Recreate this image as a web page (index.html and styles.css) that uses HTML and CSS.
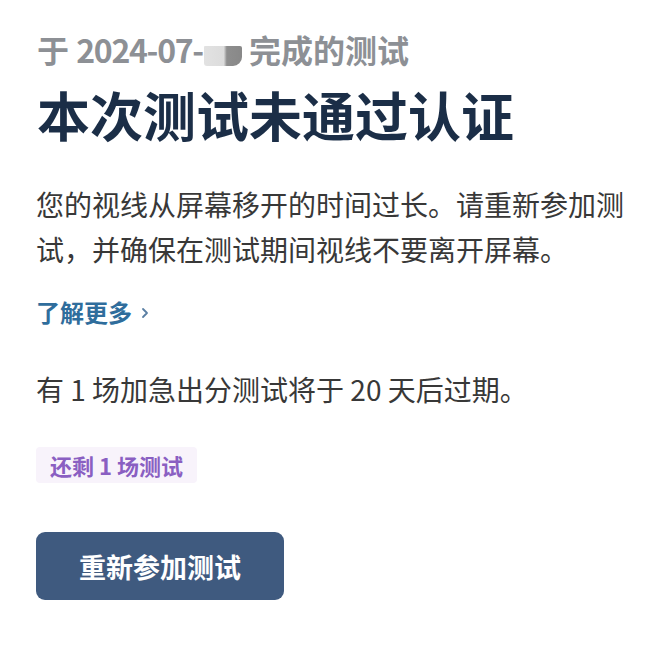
FILE: index.html
```html
<!DOCTYPE html>
<html lang="zh-CN">
<head>
<meta charset="utf-8">
<title>测试结果</title>
<link rel="stylesheet" href="styles.css">
</head>
<body>
<main class="page">
  <p class="meta">于 <span class="date">2024-07-</span><span class="redact"></span> 完成的测试</p>
  <h1 class="title">本次测试未通过认证</h1>
  <p class="desc">您的视线从屏幕移开的时间过长。请重新参加测试，并确保在测试期间视线不要离开屏幕。</p>
  <a class="more" href="#">了解更多<svg class="chev" width="8" height="12" viewBox="0 0 8 12"><path d="M2 2 L6 6 L2 10" fill="none" stroke="#5a7fa3" stroke-width="1.8" stroke-linecap="round" stroke-linejoin="round"/></svg></a>
  <p class="expire">有 1 场加急出分测试将于 20 天后过期。</p>
  <div class="badge">还剩 1 场测试</div>
  <button class="retry" type="button">重新参加测试</button>
</main>
</body>
</html>
```
FILE: styles.css
```css
* { box-sizing: border-box; }
html, body { margin: 0; padding: 0; background: #ffffff; }
body {
  font-family: "Noto Sans CJK SC", "Noto Sans", sans-serif;
  color: #3b3b3b;
}
.page {
  width: 660px;
  padding: 29px 28px 0 36px;
  display: flex;
  flex-direction: column;
  align-items: flex-start;
}
.meta {
  margin: 0;
  font-size: 32px;
  line-height: 40px;
  font-weight: 700;
  color: #8d9095;
  padding-left: 1px;
}
.date { letter-spacing: -1.3px; }
.redact {
  display: inline-block;
  width: 38px;
  height: 20px;
  margin-left: 1px;
  vertical-align: -3px;
  border-radius: 1px 2px 9px 3px;
  background: linear-gradient(90deg, #e2e2e2 0%, #dcdcdc 52%, #8e8e8e 60%, #888888 100%);
}
.title {
  margin: 13px 0 0;
  font-size: 53px;
  line-height: 64px;
  font-weight: 700;
  color: #1b2e47;
  padding-left: 1px;
}
.desc {
  margin: 36px 0 0;
  font-size: 28px;
  line-height: 45px;
  font-weight: 400;
  color: #383838;
}
.more {
  margin-top: 24px;
  font-size: 24px;
  line-height: 32px;
  font-weight: 700;
  color: #2f6d9c;
  text-decoration: none;
  display: flex;
  align-items: center;
  gap: 9px;
}
.chev { display: block; margin-top: 2px; }
.expire {
  margin: 41px 0 0;
  font-size: 28px;
  line-height: 40px;
  font-weight: 400;
  color: #383838;
}
.badge {
  margin-top: 38px;
  height: 36px;
  padding: 0 14px;
  display: flex;
  align-items: center;
  font-size: 22px;
  font-weight: 700;
  color: #8a5fc2;
  background: #f8f3fb;
  border-radius: 4px;
}
.retry {
  margin-top: 49px;
  width: 248px;
  height: 68px;
  border: none;
  border-radius: 9px;
  background: #3f5a7f;
  color: #ffffff;
  font-family: "Noto Sans CJK SC", "Noto Sans", sans-serif;
  font-size: 27px;
  font-weight: 700;
  padding: 0;
  cursor: pointer;
}
```
